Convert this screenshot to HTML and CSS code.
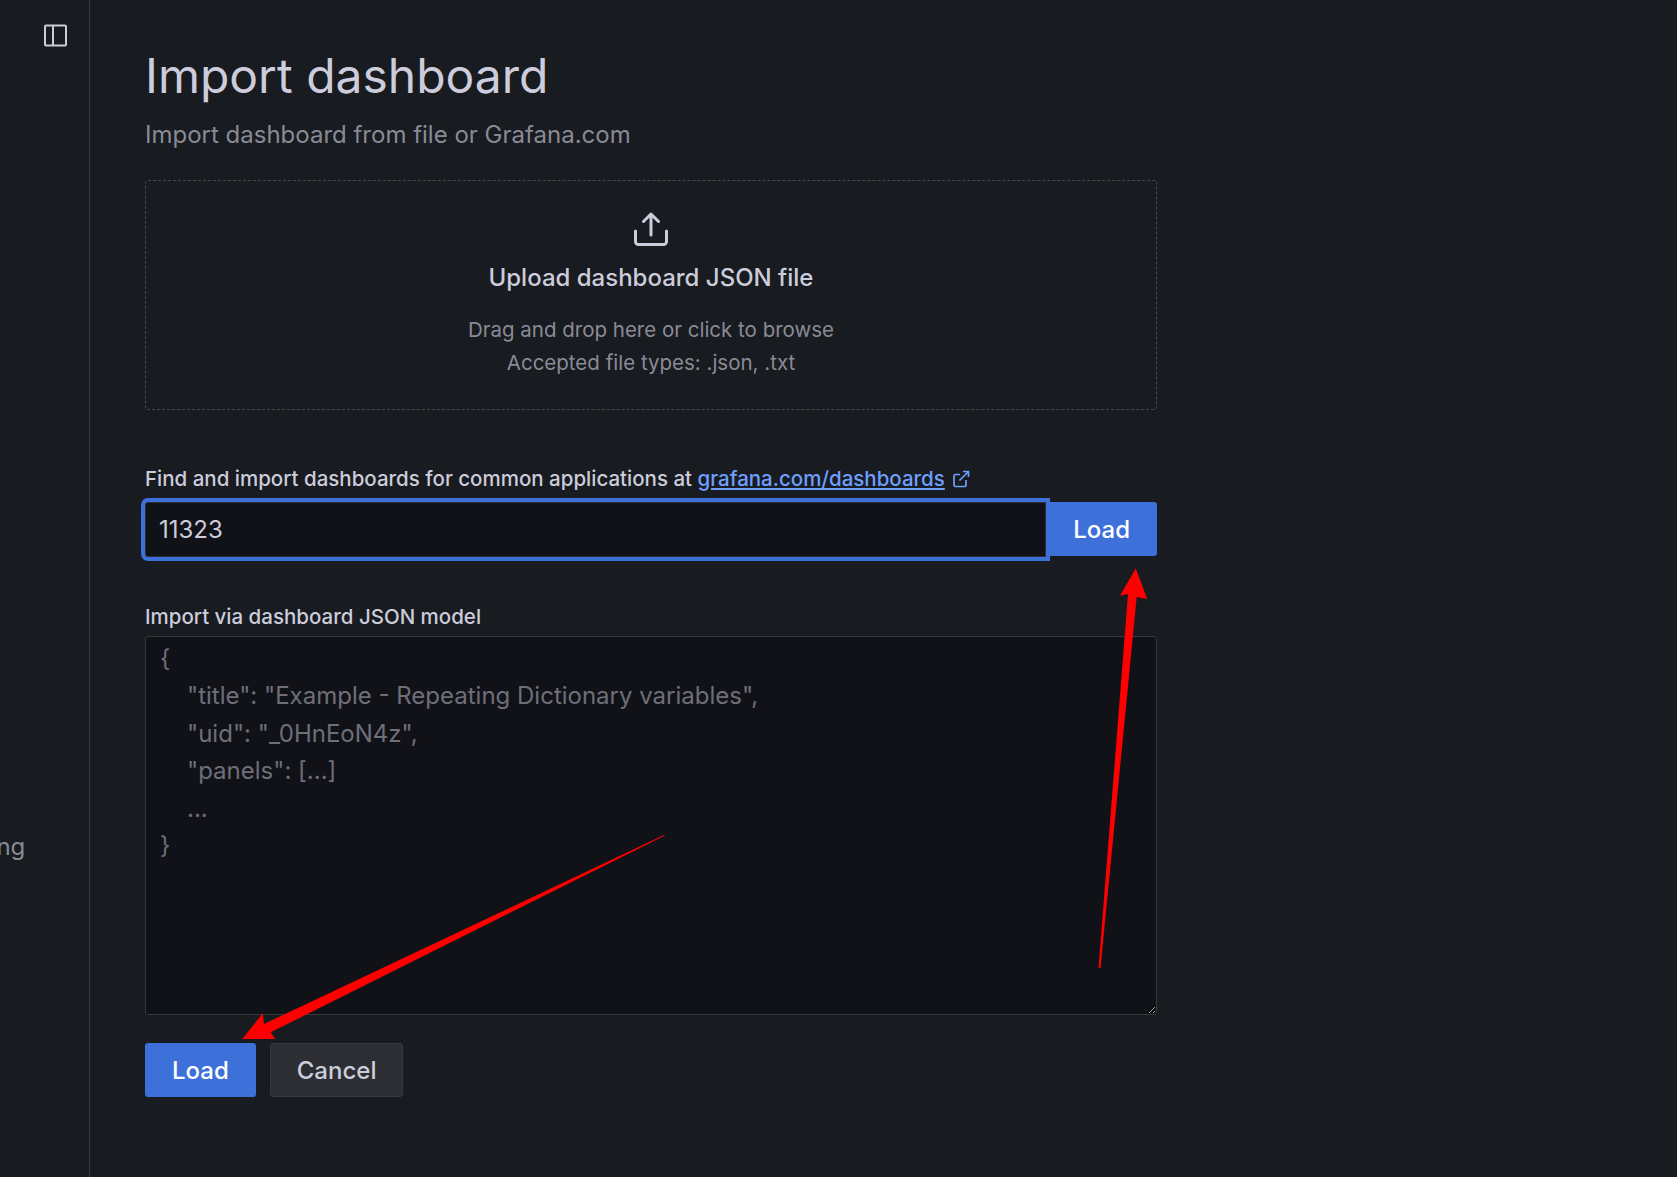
FILE: index.html
```html
<!DOCTYPE html>
<html lang="en">
	<head>
		<meta charset="UTF-8" />
		<title>Import dashboard</title>
		<link rel="stylesheet" href="styles.css">
	</head>
	<body>
		<aside class="sidebar">
			<svg class="dock-icon" viewBox="0 0 23 23" width="23" height="23" fill="none" stroke="#ccccdc" stroke-width="2">
				<rect x="1" y="1.5" width="21" height="20" rx="1"></rect>
				<path d="M9 1.5v20"></path>
			</svg>
			<span class="nav-item">Alerting</span>
		</aside>

		<main class="content">
			<h1>Import dashboard</h1>
			<p class="subtitle">Import dashboard from file or Grafana.com</p>

			<div class="dropzone">
				<svg class="upload-icon" viewBox="0 0 34 34" width="34" height="34" fill="none" stroke="#ccccdc" stroke-width="3" stroke-linecap="round" stroke-linejoin="round">
					<path d="M17 23V2M9.5 9.5 17 2l7.5 7.5"></path>
					<path d="M1.5 19v10.500a3 3 0 0 0 3 3h25a3 3 0 0 0 3-3V19"></path>
				</svg>
				<div class="dropzone-title">Upload dashboard JSON file</div>
				<div class="dropzone-hint">Drag and drop here or click to browse</div>
				<div class="dropzone-hint">Accepted file types: .json, .txt</div>
			</div>

			<label class="field-label first">
				Find and import dashboards for common applications at
				<a href="#">grafana.com/dashboards</a>
				<svg class="ext-icon" viewBox="0 0 18 18" width="18" height="18" fill="none" stroke="#6e9fff" stroke-width="1.700">
					<path d="M14 10v5a1.500 1.500 0 0 1-1.500 1.500h-9A1.500 1.500 0 0 1 2 15V6a1.500 1.500 0 0 1 1.500-1.500H8"></path>
					<path d="M11 1.500h5.500V7M16.500 1.500 7.500 10.500"></path>
				</svg>
			</label>
			<div class="id-row">
				<input class="id-input" type="text" value="11323" />
				<button class="btn btn-primary btn-attached">Load</button>
			</div>

			<label class="field-label second">Import via dashboard JSON model</label>
			<textarea class="json-input" placeholder="{&#10;    &quot;title&quot;: &quot;Example - Repeating Dictionary variables&quot;,&#10;    &quot;uid&quot;: &quot;_0HnEoN4z&quot;,&#10;    &quot;panels&quot;: [...]&#10;    ...&#10;}"></textarea>

			<div class="actions">
				<button class="btn btn-primary">Load</button>
				<button class="btn btn-secondary">Cancel</button>
			</div>
		</main>

		<!-- red annotation arrows drawn over the screenshot -->
		<svg class="arrows" viewBox="0 0 1677 1177" width="1677" height="1177">
			<polygon fill="#ff0000" points="1098.500,968 1100.500,968 1136.700,597 1147.300,599 1135.700,568.300 1120,595.700 1128,594"></polygon>
			<polygon fill="#ff0000" points="665,835.500 664,835 264,1024 262.700,1013.300 242.300,1039 275.300,1039 270.700,1032.300"></polygon>
		</svg>
	</body>
</html>
```

FILE: styles.css
```css
* {
	box-sizing: border-box;
}
html, body {
	height: 100%;
}
body {
	margin: 0;
	background-color: #181b1f;
	color: #ccccdc;
	font-family: Inter, "Noto Sans", sans-serif;
	display: flex;
	overflow: hidden;
}
.sidebar {
	width: 90px;
	flex-shrink: 0;
	border-right: 1px solid #3a3d42;
	overflow: hidden;
	position: relative;
	padding-top: 24px;
	display: flex;
	flex-direction: column;
}
.dock-icon {
	margin-left: 44px;
}
.nav-item {
	margin-top: 784px;
	margin-left: -63px;
	font-size: 24px;
	line-height: 32px;
	color: rgba(204, 204, 220, 0.65);
	white-space: nowrap;
}
.content {
	width: 1067px;
	padding: 0 0 0 55px;
}
h1 {
	margin: 46px 0 0;
	font-size: 48px;
	font-weight: 400;
	line-height: 60px;
}
.subtitle {
	margin: 13px 0 0;
	font-size: 24px;
	line-height: 32px;
	color: rgba(204, 204, 220, 0.65);
}
.dropzone {
	margin-top: 29px;
	height: 230px;
	border: 1px dashed #46494e;
	border-radius: 3px;
	display: flex;
	flex-direction: column;
	align-items: center;
	padding-top: 31px;
}
.upload-icon {
	display: block;
}
.dropzone-title {
	margin-top: 16px;
	margin-bottom: 19px;
	font-size: 24px;
	line-height: 32px;
	font-weight: 500;
}
.dropzone-hint {
	font-size: 20.500px;
	line-height: 33px;
	color: rgba(204, 204, 220, 0.65);
}
.field-label {
	display: block;
	font-size: 20.500px;
	font-weight: 500;
	line-height: 28px;
}
.field-label.first {
	margin-top: 55px;
}
.field-label.second {
	margin-top: 46px;
}
.field-label a {
	color: #6e9fff;
	text-decoration: underline;
}
.ext-icon {
	vertical-align: -2px;
	margin-left: 2px;
}
.id-row {
	display: flex;
	margin-top: 9px;
}
.id-input {
	flex: 1;
	height: 55px;
	padding: 0 13px;
	background-color: #111217;
	border: 1px solid #2c2e33;
	border-radius: 3px 0 0 3px;
	color: #ccccdc;
	font: 400 24px Inter, sans-serif;
	outline: none;
	box-shadow: 0 0 0 4px #3d71d9;
	position: relative;
}
.btn {
	height: 54px;
	padding: 0 26px;
	border: 1px solid transparent;
	border-radius: 3px;
	font: 500 24px Inter, sans-serif;
}
.btn-primary {
	background-color: #3d71d9;
	color: #fff;
}
.btn-secondary {
	background-color: #2c2e33;
	border-color: #36383d;
	color: #ccccdc;
}
.btn-attached {
	border-radius: 0 3px 3px 0;
}
.json-input {
	display: block;
	width: 100%;
	height: 379px;
	margin-top: 5px;
	padding: 3px 14px;
	background-color: #111217;
	border: 1px solid #36383d;
	border-radius: 3px;
	color: #ccccdc;
	font: 400 24px/37.400px Inter, sans-serif;
	outline: none;
}
.json-input::placeholder {
	color: rgba(204, 204, 220, 0.5);
	opacity: 1;
}
.actions {
	display: flex;
	gap: 14px;
	margin-top: 28px;
}
.arrows {
	position: absolute;
	top: 0;
	left: 0;
	pointer-events: none;
}
```
